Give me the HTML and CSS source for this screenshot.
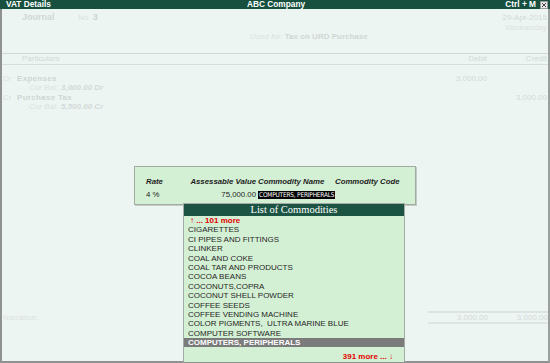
FILE: index.html
```html
<!DOCTYPE html>
<html lang="en">
<head>
    <meta charset="UTF-8">
    <title>VAT Details</title>
    <link rel="stylesheet" href="styles.css">
</head>
<body>
    <div class="titlebar">
        <span class="tb-left">VAT Details</span>
        <span class="tb-mid">ABC Company</span>
        <span class="tb-right">Ctrl + M
            <svg class="close" width="8" height="8" viewBox="0 0 8 8">
                <rect x="0.5" y="0.5" width="7" height="7" fill="#e8e8e8" stroke="#9a9a9a"/>
                <path d="M2 2 L6 6 M6 2 L2 6" stroke="#444" stroke-width="1"/>
            </svg>
        </span>
    </div>

    <div class="voucher">
        <div class="head">
            <div class="line">
                <span class="vch-type">Journal</span>
                <span class="vch-no">No. <b>3</b></span>
                <span class="date">29-Apr-2015</span>
            </div>
            <div class="line">
                <span class="day">Wednesday</span>
            </div>
            <div class="line used">
                <i>Used for:</i>&nbsp; <b>Tax on URD Purchase</b>
            </div>
        </div>

        <div class="cols">
            <span class="particulars">Particulars</span>
            <span class="amt">Debit</span>
            <span class="amt">Credit</span>
        </div>

        <div class="entries">
            <div class="entry">
                <span class="drcr">Dr</span>
                <b class="ledger">Expenses</b>
                <span class="amt">3,000.00</span>
                <span></span>
            </div>
            <div class="bal"><i>Cur Bal:</i><b><i>3,000.00 Dr</i></b></div>
            <div class="entry">
                <span class="drcr">Cr</span>
                <b class="ledger">Purchase Tax</b>
                <span></span>
                <span class="amt">3,000.00</span>
            </div>
            <div class="bal"><i>Cur Bal:</i><b><i>5,500.00 Cr</i></b></div>
        </div>

        <div class="narration">
            <span class="narr-label">Narration:</span>
            <div class="totals">
                <span class="amt">3,000.00</span>
                <span class="amt">3,000.00</span>
            </div>
        </div>
    </div>

    <div class="vat-box">
        <div class="vat-grid">
            <span class="th">Rate</span>
            <span class="th right">Assessable Value</span>
            <span class="th">Commodity Name</span>
            <span class="th">Commodity Code</span>
            <span>4 %</span>
            <span class="right">75,000.00</span>
            <span><span class="cur-field">COMPUTERS, PERIPHERALS</span></span>
            <span></span>
        </div>
    </div>

    <div class="list">
        <div class="list-title">List of Commodities</div>
        <div class="list-body">
            <div class="more">&uarr; ... 101 more</div>
            <div class="item">CIGARETTES</div>
            <div class="item">CI PIPES AND FITTINGS</div>
            <div class="item">CLINKER</div>
            <div class="item">COAL AND COKE</div>
            <div class="item">COAL TAR AND PRODUCTS</div>
            <div class="item">COCOA BEANS</div>
            <div class="item">COCONUTS,COPRA</div>
            <div class="item">COCONUT SHELL POWDER</div>
            <div class="item">COFFEE SEEDS</div>
            <div class="item">COFFEE VENDING MACHINE</div>
            <div class="item">COLOR PIGMENTS,&nbsp; ULTRA MARINE BLUE</div>
            <div class="item">COMPUTER SOFTWARE</div>
            <div class="item selected">COMPUTERS, PERIPHERALS</div>
            <div class="more bottom">391 more ... &darr;</div>
        </div>
    </div>
</body>
</html>
```

FILE: styles.css
```css
html, body {
    margin: 0;
    padding: 0;
}
body {
    width: 550px;
    height: 363px;
    font-family: 'Liberation Sans', Arial, sans-serif;
    font-size: 8px;
    background: #edf5f3;
    color: #d2d9d7;
    position: relative;
    overflow: hidden;
}

.titlebar {
    height: 9px;
    background: #17503f;
    color: #fff;
    font-weight: bold;
    font-size: 8.3px;
    line-height: 9px;
    display: flex;
    align-items: center;
    position: relative;
}
.tb-left {
    padding-left: 6px;
}
.tb-mid {
    position: absolute;
    left: 247px;
}
.tb-right {
    margin-left: auto;
    display: flex;
    align-items: center;
    gap: 4px;
    padding-right: 2px;
}
.close {
    display: block;
}

.voucher {
    height: 352px;
    border-left: 2px solid #8e9392;
    border-right: 2px solid #9aa09e;
    border-bottom: 2px solid #8e9392;
    display: flex;
    flex-direction: column;
}

.head {
    padding-top: 4px;
    margin-bottom: 11px;
}
.line {
    display: flex;
    height: 9.5px;
    line-height: 9.5px;
}
.vch-type {
    font-weight: bold;
    font-size: 9px;
    padding-left: 20px;
    width: 56px;
    color: #d0d7d5;
}
.vch-no {
    color: #d9dfdd;
}
.vch-no b {
    font-size: 9px;
    color: #cdd4d2;
}
.date, .day {
    margin-left: auto;
    padding-right: 1px;
}
.day {
    color: #dbe1df;
}
.used {
    padding-left: 248px;
    color: #dbe1df;
}
.used b {
    color: #d0d7d5;
}

.cols {
    display: grid;
    grid-template-columns: 1fr 60px 60px;
    border-top: 1px solid #d3d8d7;
    border-bottom: 1px solid #d8dddc;
    height: 10px;
    line-height: 10px;
    padding-right: 1px;
}
.particulars {
    padding-left: 20px;
}
.amt {
    text-align: right;
}

.entries {
    padding-top: 9px;
}
.entry {
    display: grid;
    grid-template-columns: 14px 1fr 60px 60px;
    height: 9.5px;
    line-height: 9.5px;
    padding-left: 1px;
    padding-right: 1px;
}
.drcr {
    color: #dbe1df;
}
.ledger {
    color: #cfd6d4;
    letter-spacing: 0.3px;
}
.entry .amt {
    color: #d3d9d8;
}
.bal {
    height: 9.5px;
    line-height: 9.5px;
    padding-left: 27px;
    display: flex;
    color: #dbe1df;
}
.bal i {
    width: 32px;
}
.bal b {
    color: #d3d9d8;
}

.narration {
    margin-top: auto;
    margin-bottom: 37px;
    display: grid;
    grid-template-columns: 1fr 120px;
    align-items: center;
}
.narr-label {
    padding-left: 1px;
    color: #dbe1df;
}
.totals {
    display: grid;
    grid-template-columns: 60px 60px;
    border-top: 2px solid #dfe4e3;
    border-bottom: 2px solid #dfe4e3;
    height: 9px;
    line-height: 9px;
    padding-right: 1px;
}

.vat-box {
    position: absolute;
    left: 134px;
    top: 166px;
    width: 280px;
    height: 37px;
    background: #d4f0d4;
    border: 1px solid #a3aba3;
    box-shadow: 1px 1px 0 #c4cac4;
    color: #1e1e1e;
    font-size: 7.8px;
}
.vat-grid {
    display: grid;
    grid-template-columns: 40px 68px 75px auto;
    column-gap: 2px;
    row-gap: 3px;
    padding: 10px 0 0 11px;
    line-height: 10px;
    white-space: nowrap;
}
.th {
    font-weight: bold;
    font-style: italic;
}
.right {
    text-align: right;
}
.cur-field {
    display: inline-block;
    vertical-align: top;
    margin-top: 1px;
    background: #000;
    color: #fff;
    font-family: 'DejaVu Sans Condensed', 'DejaVu Sans', sans-serif;
    font-size: 6.5px;
    line-height: 8px;
    height: 8px;
    padding: 0 1px;
    letter-spacing: -0.2px;
}

.list {
    position: absolute;
    left: 183px;
    top: 203px;
    width: 220px;
    bottom: 1px;
    background: #d4f0d4;
    border: 1px solid #a3aba3;
    border-bottom: none;
    color: #262626;
}
.list-title {
    height: 12px;
    line-height: 12px;
    background: #1b5443;
    color: #fff;
    text-align: center;
    font-family: 'Liberation Serif', 'Times New Roman', serif;
    font-size: 10.5px;
}
.list-body {
    font-size: 8px;
}
.item, .more {
    height: 9.4px;
    line-height: 9.4px;
    padding-left: 4px;
    white-space: nowrap;
}
.more {
    color: #e40000;
    font-weight: bold;
    padding-left: 6px;
}
.more.bottom {
    text-align: right;
    padding-right: 11px;
    margin-top: 5px;
}
.selected {
    background: #7b7b7b;
    color: #fff;
    font-weight: bold;
}
```
